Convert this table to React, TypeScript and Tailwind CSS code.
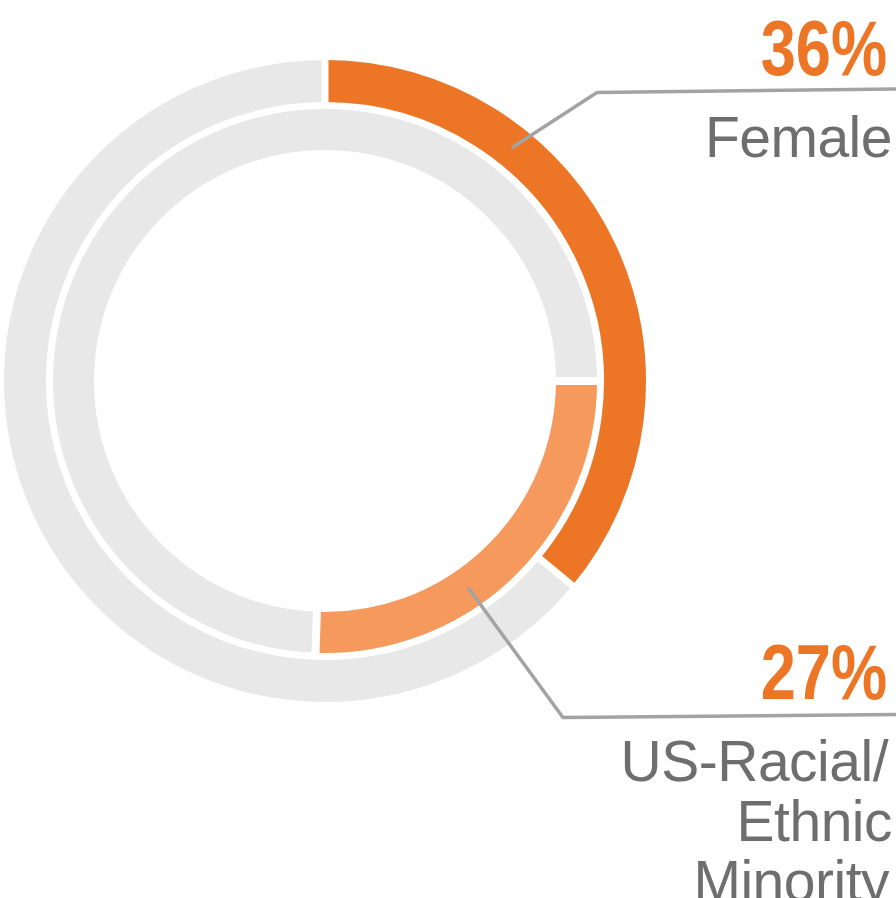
const CX = 325
const CY = 381

function pt(r: number, deg: number) {
  const a = (deg * Math.PI) / 180
  return [CX + r * Math.sin(a), CY - r * Math.cos(a)]
}

function arc(r: number, from: number, to: number) {
  const [x1, y1] = pt(r, from)
  const [x2, y2] = pt(r, to)
  const large = to - from > 180 ? 1 : 0
  return `M${x1},${y1} A${r},${r} 0 ${large} 1 ${x2},${y2}`
}

function gap(r1: number, r2: number, deg: number) {
  const [x1, y1] = pt(r1, deg)
  const [x2, y2] = pt(r2, deg)
  return `M${x1},${y1} L${x2},${y2}`
}

function Chart() {
  return (
    <svg className="absolute inset-0" width="896" height="898" viewBox="0 0 896 898">
      {/* outer ring: female */}
      <circle cx={CX} cy={CY} r={300} fill="none" stroke="#e8e8e8" strokeWidth={42} />
      <path d={arc(300, 0, 129.6)} fill="none" stroke="#ec7625" strokeWidth={42} />
      <path d={gap(276, 324, 0)} stroke="#fff" strokeWidth={7} />
      <path d={gap(276, 324, 129.6)} stroke="#fff" strokeWidth={7} />

      {/* inner ring: minority */}
      <circle cx={CX} cy={CY} r={251.5} fill="none" stroke="#e8e8e8" strokeWidth={41} />
      <path d={arc(251.5, 90, 182)} fill="none" stroke="#f6995d" strokeWidth={41} />
      <path d={gap(228, 275, 90)} stroke="#fff" strokeWidth={8} />
      <path d={gap(228, 275, 182)} stroke="#fff" strokeWidth={8} />

      {/* callouts */}
      <path
        d="M513,147 L597,92.5 L896,89"
        fill="none"
        stroke="#a3a3a3"
        strokeWidth={3.5}
        strokeLinecap="round"
        strokeLinejoin="round"
      />
      <path
        d="M469,589 L563,717.5 L896,714.5"
        fill="none"
        stroke="#a3a3a3"
        strokeWidth={3.5}
        strokeLinecap="round"
        strokeLinejoin="round"
      />
    </svg>
  )
}

export default function App() {
  return (
    <div className="relative w-[896px] h-[898px] overflow-hidden bg-white">
      <Chart />
      <div className="relative flex flex-col items-end pr-[7px] pt-[10px] font-['Liberation_Sans',Arial,sans-serif]">
        {/* condensed bold look */}
        <span className="mr-[2px] origin-right scale-x-[0.82] font-bold text-[77px] leading-none text-[#ec7625]">
          36%
        </span>
        <span className="mt-[22px] -mr-[3px] text-[57px] leading-none tracking-[-0.5px] text-[#6e6e6e]">Female</span>

        <span className="mt-[468px] mr-[2px] origin-right scale-x-[0.82] font-bold text-[77px] leading-none text-[#ec7625]">
          27%
        </span>
        <div className="mt-[20px] flex flex-col items-end text-[57px] leading-[60px] tracking-[-0.5px] text-[#6e6e6e]">
          <span className="mr-[1px]">US-Racial/</span>
          <span className="-mr-[3px]">Ethnic</span>
          <span>Minority</span>
        </div>
      </div>
    </div>
  )
}
